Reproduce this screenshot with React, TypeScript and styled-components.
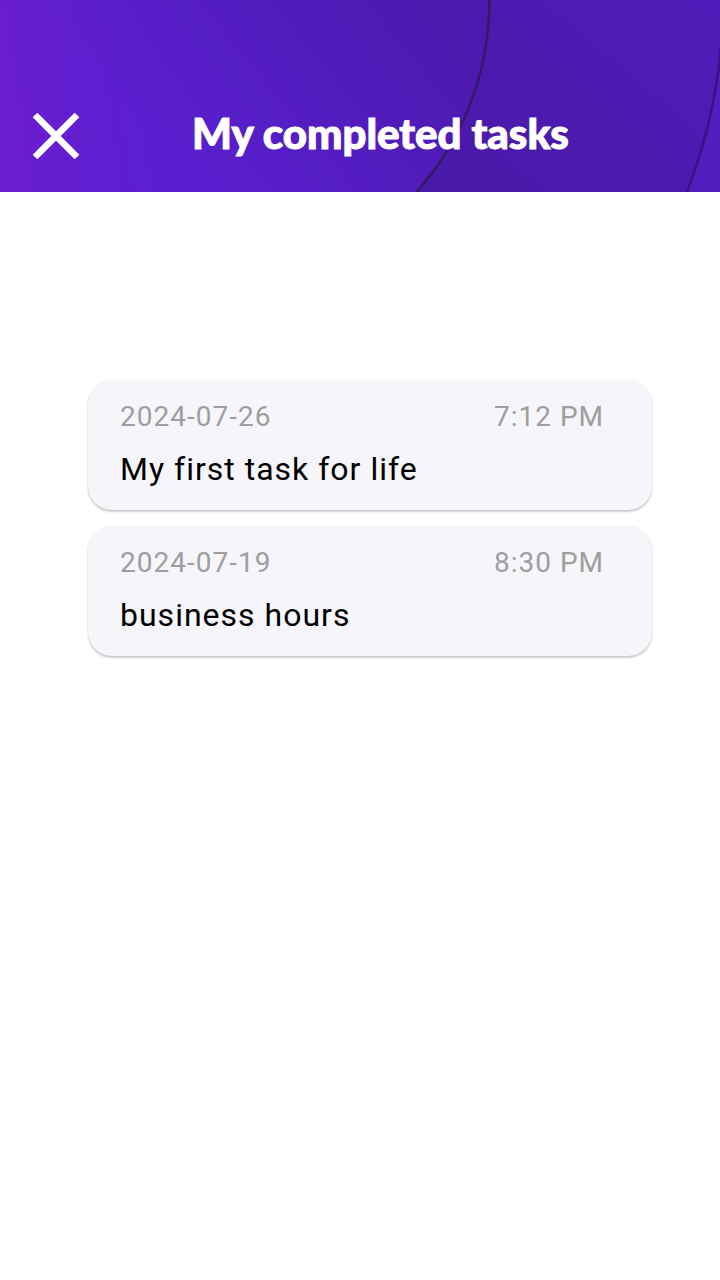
import React from "react";
import styled, { createGlobalStyle } from "styled-components";
import { MdClose } from "react-icons/md";

const GlobalStyle = createGlobalStyle`
  *, *::before, *::after { box-sizing: border-box; }
  body {
    margin: 0;
    background: #ffffff;
    font-family: Roboto, "Liberation Sans", sans-serif;
  }
`;

const Header = styled.header`
  position: relative;
  display: flex;
  align-items: center;
  gap: 96px;
  padding: 96px 16px 16px;
  overflow: hidden;
  background: #4f1ab4;
`;

const HeaderArt = styled.svg`
  position: absolute;
  inset: 0;
  width: 100%;
  height: 100%;
`;

const CloseButton = styled.button`
  position: relative;
  display: flex;
  flex: none;
  padding: 0;
  border: 0;
  background: none;
  color: #ffffff;
  cursor: pointer;
`;

const Title = styled.h1`
  position: relative;
  margin: 0;
  padding-bottom: 6px;
  color: #ffffff;
  font-family: Lato, "Liberation Sans", sans-serif;
  font-size: 42px;
  font-weight: 900;
  line-height: 48px;
  white-space: nowrap;
  -webkit-text-stroke: 1px #ffffff;
`;

const TaskList = styled.ul`
  display: flex;
  flex-direction: column;
  gap: 16px;
  margin: 0;
  padding: 188px 68px 48px 88px;
  list-style: none;
`;

const TaskCard = styled.li`
  display: flex;
  flex-direction: column;
  gap: 16px;
  padding: 21px 48px 21px 32px;
  border-radius: 24px;
  background: #f6f5fa;
  box-shadow: 0 2px 2px rgba(0, 0, 0, 0.2), 0 0 2px rgba(0, 0, 0, 0.08);
  letter-spacing: 1px;
`;

const TaskMeta = styled.div`
  display: flex;
  justify-content: space-between;
  color: #9e9e9e;
  font-size: 28px;
  line-height: 32px;
`;

const TaskName = styled.p`
  margin: 0;
  color: #000000;
  font-size: 32px;
  line-height: 40px;
`;

const tasks = [
  { date: "2024-07-26", time: "7:12 PM", name: "My first task for life" },
  { date: "2024-07-19", time: "8:30 PM", name: "business hours" },
];

function HeaderBackground() {
  return (
    <HeaderArt viewBox="0 0 720 192" preserveAspectRatio="xMidYMid slice" aria-hidden="true">
      <defs>
        <linearGradient id="outer" gradientUnits="userSpaceOnUse" x1="600" y1="192" x2="720" y2="60">
          <stop offset="0" stopColor="#521cba" />
          <stop offset="1" stopColor="#541dc0" />
        </linearGradient>
        <linearGradient id="middle" gradientUnits="userSpaceOnUse" x1="430" y1="192" x2="640" y2="-60">
          <stop offset="0" stopColor="#4919a7" />
          <stop offset="1" stopColor="#511bb9" />
        </linearGradient>
        <linearGradient id="inner" gradientUnits="userSpaceOnUse" x1="190" y1="190" x2="430" y2="-10">
          <stop offset="0" stopColor="#5a1fd0" />
          <stop offset="1" stopColor="#4c19ae" />
        </linearGradient>
        <linearGradient id="glow" gradientUnits="userSpaceOnUse" x1="0" y1="110" x2="190" y2="80">
          <stop offset="0" stopColor="#701cd0" stopOpacity="0.75" />
          <stop offset="1" stopColor="#601dcc" stopOpacity="0" />
        </linearGradient>
      </defs>
      <rect width="720" height="192" fill="url(#outer)" />
      <circle cx="194" cy="0" r="529" fill="url(#middle)" stroke="#3a1286" strokeWidth="2.5" />
      <circle cx="201" cy="0" r="288.5" fill="url(#inner)" stroke="#331a66" strokeWidth="2.5" />
      <rect width="220" height="192" fill="url(#glow)" />
    </HeaderArt>
  );
}

export default function App() {
  return (
    <>
      <GlobalStyle />
      <Header>
        <HeaderBackground />
        <CloseButton type="button" aria-label="Close">
          <MdClose size={80} />
        </CloseButton>
        <Title>My completed tasks</Title>
      </Header>
      <main>
        <TaskList>
          {tasks.map((task) => (
            <TaskCard key={task.date}>
              <TaskMeta>
                <time dateTime={task.date}>{task.date}</time>
                <span>{task.time}</span>
              </TaskMeta>
              <TaskName>{task.name}</TaskName>
            </TaskCard>
          ))}
        </TaskList>
      </main>
    </>
  );
}
